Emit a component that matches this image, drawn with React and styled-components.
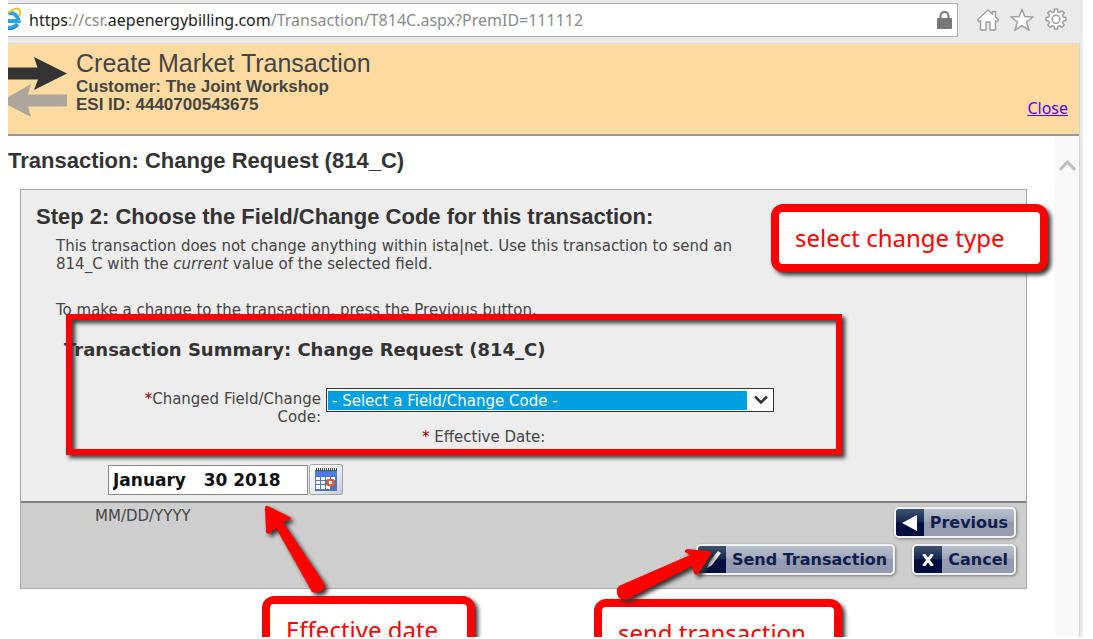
import React from 'react';
import styled, { createGlobalStyle } from 'styled-components';

const verdana = '"DejaVu Sans", Verdana, sans-serif';
const arial = '"Liberation Sans", Arial, sans-serif';
const segoe = '"Noto Sans", "Segoe UI", sans-serif';

const GlobalStyle = createGlobalStyle`
  *, *::before, *::after { box-sizing: border-box; }
  body { margin: 0; background: #fff; color: #444; font-family: ${verdana}; }
  h1, h2, h3, p { margin: 0; }
`;

const BrowserWindow = styled.div`
  position: relative;
  display: flex;
  flex-direction: column;
  min-height: calc(100vh - 2px);
  margin: 0 10px 2px 8px;
  padding-right: 3px;
  overflow: hidden;
  background: #eaeaea;
`;

const Toolbar = styled.div`
  display: flex;
  align-items: center;
  gap: 18px;
  height: 43px;
  padding: 3px 12px 6px 0;
`;

const AddressBar = styled.div`
  display: flex;
  flex: 1;
  align-items: center;
  height: 34px;
  padding-right: 5px;
  border: 1px solid #adadad;
  border-left: 0;
  background: #fff;
`;

const Url = styled.div`
  flex: 1;
  margin-left: 7px;
  color: #8a8a8a;
  font: 16px/20px ${segoe};
  white-space: nowrap;
`;

const Strong = styled.span`
  color: #222;
`;

const ToolIcons = styled.div`
  display: flex;
  gap: 10px;
`;

const IconButton = styled.button`
  display: flex;
  padding: 0;
  border: 0;
  background: none;
`;

const Viewport = styled.div`
  display: flex;
  flex: 1;
  flex-direction: column;
  border-top: 1px solid #dcdcdc;
  border-right: 1px solid #d4d4d4;
  background: #fff;
`;

const Header = styled.header`
  display: flex;
  height: 92px;
  padding: 4px 11px 0 0;
  gap: 9px;
  border-bottom: 2px solid #999;
  background: #ffdba2;
`;

const HeaderText = styled.div`
  flex: 1;
  font-family: ${arial};
`;

const PageTitle = styled.h1`
  font-size: 25px;
  font-weight: 400;
  line-height: 30px;
`;

const Detail = styled.p`
  font-size: 17px;
  font-weight: 700;
  line-height: 18px;
`;

const CloseLink = styled.a`
  align-self: flex-end;
  margin-bottom: 14px;
  color: #5500e0;
  font: 16px/24px ${segoe};
`;

const Body = styled.div`
  display: flex;
  flex: 1;
`;

const Main = styled.main`
  flex: 1;
  padding: 12px 28px 48px 0;
`;

const Heading = styled.h2`
  color: #333;
  font: 700 22px/26px ${arial};
`;

const ScrollTrack = styled.div`
  width: 24px;
  padding: 22px 0 0 4px;
  background: #f8f8f8;
`;

const Panel = styled.form`
  margin: 15px 0 0 12px;
  border: 1px solid #a8a8a8;
  background: #ededed;
`;

const PanelContent = styled.div`
  padding: 14px 15px 6px;
`;

const Copy = styled.div`
  max-width: 740px;
  margin: 7px 0 0 20px;
  font-size: 15px;
  line-height: 18px;
`;

const Spaced = styled.p`
  margin-top: 28px;
`;

const SummaryTitle = styled.h3`
  margin: 19px 0 0 28px;
  color: #333;
  font: 700 18px/24px ${verdana};
`;

const FieldRow = styled.div`
  display: flex;
  gap: 5px;
  margin-top: 26px;
  font-size: 15px;
  line-height: 18px;
`;

const FieldLabel = styled.label`
  width: 285px;
  padding: 2px 0 0 90px;
  text-align: right;
`;

const Required = styled.span`
  color: #800000;
`;

const SelectWrap = styled.div`
  position: relative;
  width: 448px;
  height: 24px;
`;

const Select = styled.select`
  display: block;
  width: 100%;
  height: 24px;
  padding: 2px 1px 1px;
  border: 1px solid #333;
  border-radius: 0;
  appearance: none;
  background: linear-gradient(#00a0e0, #00a0e0) left / calc(100% - 25px) 100% no-repeat content-box, #fff;
  color: #fff;
  font: 15px/20px ${verdana};
  text-indent: 4px;
`;

const SelectArrow = styled.svg`
  position: absolute;
  top: 7px;
  right: 5px;
  pointer-events: none;
`;

const DateLabel = styled.label`
  display: block;
  margin: 2px 0 0 386px;
  font-size: 15px;
  line-height: 18px;
`;

const DateRow = styled.div`
  display: flex;
  align-items: flex-end;
  gap: 1px;
  margin: 18px 0 0 72px;
`;

const DateInput = styled.input`
  width: 200px;
  height: 30px;
  padding: 0 4px;
  border: 1px solid #888;
  background: #fff;
  color: #111;
  font: 700 17px/24px ${verdana};
  white-space: pre;
`;

const CalendarButton = styled.button`
  display: flex;
  align-items: center;
  justify-content: center;
  width: 34px;
  height: 31px;
  padding: 0;
  border: 1px solid #a3a3b5;
  border-radius: 3px;
  background: linear-gradient(135deg, #fff, #e6e6f0 60%, #c8c8d8);
`;

const PanelFooter = styled.div`
  display: flex;
  justify-content: space-between;
  height: 87px;
  padding: 4px 10px 0 74px;
  border-top: 2px solid #808080;
  background: #cecece;
`;

const Hint = styled.span`
  font-size: 15px;
  line-height: 18px;
`;

const Actions = styled.div`
  display: flex;
  flex-direction: column;
  align-items: flex-end;
  gap: 6px;
`;

const ActionRow = styled.div`
  display: flex;
  gap: 17px;
`;

const ActionButton = styled.button`
  display: flex;
  align-items: stretch;
  height: 31px;
  padding: 0;
  overflow: hidden;
  border: 2px solid #f1f2f5;
  border-radius: 5px;
  background: linear-gradient(#b8bfcd, #a2a9bb 45%, #949bb0 50%, #959cb0);
  box-shadow: 1px 1px 3px #777;
  color: #0f1e4c;
  font: 700 16px/27px ${verdana};
`;

const ActionIcon = styled.span`
  display: flex;
  align-items: center;
  justify-content: center;
  width: 28px;
  background: linear-gradient(#3f5370, #15264d 48%, #000f3e 52%);
`;

const ActionText = styled.span`
  padding: 0 6px;
`;

const Callout = styled.div`
  position: absolute;
  top: ${(p) => p.$top}px;
  left: ${(p) => (p.$left === undefined ? 'auto' : `${p.$left}px`)};
  right: ${(p) => (p.$right === undefined ? 'auto' : `${p.$right}px`)};
  width: ${(p) => p.$width}px;
  height: 68px;
  padding: 10px 16px;
  border: 8px solid #f00;
  border-radius: 12px;
  background: #fff;
  box-shadow: 3px 3px 4px #333;
  color: #f00;
  font: 24px/32px ${segoe};
  white-space: nowrap;
`;

const Highlight = styled.div`
  position: absolute;
  top: 314px;
  left: 58px;
  right: 241px;
  height: 141px;
  border: 6px solid #f00;
  filter: drop-shadow(3px 3px 2px #333);
  pointer-events: none;
`;

const Pointer = styled.svg`
  position: absolute;
  top: ${(p) => p.$top}px;
  left: ${(p) => (p.$left === undefined ? 'auto' : `${p.$left}px`)};
  right: ${(p) => (p.$right === undefined ? 'auto' : `${p.$right}px`)};
  overflow: visible;
  filter: drop-shadow(3px 3px 2px #333);
  pointer-events: none;
`;

function BrowserLogo() {
  return (
    <svg width="14" height="26" viewBox="0 0 14 26" aria-hidden="true">
      <path d="M0 6.500C5 4.500 9.500 8 10.500 14H0M0 20.500c4 .8 7-.6 9.500-3.500" fill="none" stroke="#2aa3df" strokeWidth="4" />
      <path d="M0 22.500c4 .6 8-1 10.500-4.500" fill="none" stroke="#1679b8" strokeWidth="1" />
      <path d="M0 6C5 1.500 10 .5 11.700 2.800c.9 1.500.4 4-.8 6.500" fill="none" stroke="#f6c21c" strokeWidth="2" />
    </svg>
  );
}

function LockIcon() {
  return (
    <svg width="15" height="18" viewBox="0 0 15 18" aria-hidden="true">
      <path d="M3.500 8V5a4 4 0 0 1 8 0v3" fill="none" stroke="#777" strokeWidth="2" />
      <rect y="7" width="15" height="11" rx="1" fill="#777" />
    </svg>
  );
}

const glyph = { fill: '#fff', stroke: '#a0a0a0', strokeWidth: 1.5, strokeLinejoin: 'round' };

function HomeIcon() {
  return (
    <svg width="24" height="24" viewBox="0 0 24 24" aria-hidden="true">
      <path {...glyph} d="M12 2 1.500 12l1.700 1.800 1.300-1V22h5.500v-8h4v8h5.500v-9.200l1.300 1 1.700-1.800-3-2.900V3.500h-3v2.700z" />
    </svg>
  );
}

function StarIcon() {
  return (
    <svg width="24" height="24" viewBox="0 0 24 24" aria-hidden="true">
      <path {...glyph} d="m12 1.300 2.800 7.200 8.200.5-6.500 5 2.600 8.300L12 17.700l-7.100 4.600L7.500 14 1 9l8.200-.5z" />
    </svg>
  );
}

function GearIcon() {
  return (
    <svg width="24" height="24" viewBox="0 0 24 24" aria-hidden="true">
      <path {...glyph} d="M10.200 3.700 10.500 1h3l.3 2.700 2 .8 2.100-1.700L20.200 5l-1.700 2.100.8 2 2.700.4v3.100l-2.700.3-.8 2 1.700 2.100-2.300 2.300-2.100-1.700-2 .8-.3 2.600h-3l-.3-2.600-2-.8-2.100 1.700L3.800 17l1.700-2.100-.8-2-2.700-.3V9.500l2.700-.4.8-2L3.800 5l2.300-2.200 2.100 1.700z" />
      <circle cx="12" cy="11.300" r="4" {...glyph} />
    </svg>
  );
}

function TransferLogo() {
  return (
    <svg width="59" height="72" viewBox="0 0 59 72" aria-hidden="true">
      <path d="M0 19.500h29.500L26 9l33 16.500L26 42l4-10.500H0z" fill="#333" />
      <path d="M59 46.500v12H20L23 69 0 57v-8l23-13-3 10.500z" fill="#aea69a" />
    </svg>
  );
}

function CalendarIcon() {
  return (
    <svg width="23" height="23" viewBox="0 0 23 23" aria-hidden="true">
      <rect x="0" y="2" width="22" height="21" fill="#5274ae" />
      <rect x="0" y="4" width="22" height="4" fill="#4b7de8" />
      <path d="M1 9h4v3H1zm5 0h4v3H6zm5 0h4v3h-4zm5 0h4v3h-4zM1 13h4v3H1zm5 0h4v3H6zM1 17h4v4H1zm5 0h4v4H6zm5 0h4v4h-4z" fill="#fff" />
      <rect x="13" y="12" width="5" height="5" fill="#fff" stroke="#f05a30" strokeWidth="2" />
      <path d="M1 1.500h21" stroke="#444" strokeWidth="3" strokeDasharray="1 1" />
    </svg>
  );
}

export default function App() {
  return (
    <>
      <GlobalStyle />
      <BrowserWindow>
        <Toolbar>
          <AddressBar>
            <BrowserLogo />
            <Url>
              <Strong>https</Strong>://csr.<Strong>aepenergybilling.com</Strong>/Transaction/T814C.aspx?PremID=111112
            </Url>
            <LockIcon />
          </AddressBar>
          <ToolIcons>
            <IconButton aria-label="Home"><HomeIcon /></IconButton>
            <IconButton aria-label="Favorites"><StarIcon /></IconButton>
            <IconButton aria-label="Tools"><GearIcon /></IconButton>
          </ToolIcons>
        </Toolbar>
        <Viewport>
          <Header>
            <TransferLogo />
            <HeaderText>
              <PageTitle>Create Market Transaction</PageTitle>
              <Detail>Customer: The Joint Workshop</Detail>
              <Detail>ESI ID: 4440700543675</Detail>
            </HeaderText>
            <CloseLink href="#close">Close</CloseLink>
          </Header>
          <Body>
            <Main>
              <Heading>Transaction: Change Request (814_C)</Heading>
              <Panel onSubmit={(e) => e.preventDefault()}>
                <PanelContent>
                  <Heading>Step 2: Choose the Field/Change Code for this transaction:</Heading>
                  <Copy>
                    <p>
                      This transaction does not change anything within ista|net. Use this transaction to send an
                      <br />
                      814_C with the <em>current</em> value of the selected field.
                    </p>
                    <Spaced>To make a change to the transaction, press the Previous button.</Spaced>
                  </Copy>
                  <SummaryTitle>Transaction Summary: Change Request (814_C)</SummaryTitle>
                  <FieldRow>
                    <FieldLabel htmlFor="change-code">
                      <Required>*</Required>Changed Field/Change Code:
                    </FieldLabel>
                    <SelectWrap>
                      <Select id="change-code">
                        <option>- Select a Field/Change Code -</option>
                      </Select>
                      <SelectArrow width="16" height="11" viewBox="0 0 16 11" aria-hidden="true">
                        <path d="m2 1.500 6 6 6-6" fill="none" stroke="#333" strokeWidth="2.500" />
                      </SelectArrow>
                    </SelectWrap>
                  </FieldRow>
                  <DateLabel htmlFor="effective-date">
                    <Required>*</Required> Effective Date:
                  </DateLabel>
                  <DateRow>
                    <DateInput id="effective-date" defaultValue={'January\u00a0\u00a0 30 2018'} />
                    <CalendarButton type="button" aria-label="Choose date"><CalendarIcon /></CalendarButton>
                  </DateRow>
                </PanelContent>
                <PanelFooter>
                  <Hint>MM/DD/YYYY</Hint>
                  <Actions>
                    <ActionButton type="button">
                      <ActionIcon>
                        <svg width="16" height="16" viewBox="0 0 16 16" aria-hidden="true"><path d="M0 8 15 0v16z" fill="#fff" /></svg>
                      </ActionIcon>
                      <ActionText>Previous</ActionText>
                    </ActionButton>
                    <ActionRow>
                      <ActionButton type="submit">
                        <ActionIcon>
                          <svg width="20" height="20" viewBox="0 0 20 20" aria-hidden="true"><path d="m5 18 2-6L16 1l3 2-9 12z" fill="#eee" /></svg>
                        </ActionIcon>
                        <ActionText>Send Transaction</ActionText>
                      </ActionButton>
                      <ActionButton type="button">
                        <ActionIcon>
                          <svg width="12" height="12" viewBox="0 0 12 12" aria-hidden="true"><path d="m1.500 0 9 12M10.500 0l-9 12" stroke="#fff" strokeWidth="3" /></svg>
                        </ActionIcon>
                        <ActionText>Cancel</ActionText>
                      </ActionButton>
                    </ActionRow>
                  </Actions>
                </PanelFooter>
              </Panel>
            </Main>
            <ScrollTrack>
              <svg width="17" height="15" viewBox="0 0 17 15" aria-hidden="true"><path d="m1 12 7.500-8 7.500 8" fill="none" stroke="#bdbdbd" strokeWidth="3" /></svg>
            </ScrollTrack>
          </Body>
        </Viewport>

        <Highlight />
        <Callout $top={204} $right={35} $width={277}>select change type</Callout>
        <Callout $top={596} $left={254} $width={213}>Effective date</Callout>
        <Callout $top={599} $right={241} $width={248}>send transaction</Callout>
        <Pointer $top={505} $left={257} width="63" height="88" viewBox="0 0 63 88" aria-hidden="true">
          <path d="M3 1 25 12q2 2-1 3l-6 2L59 78q2 5-1 7-4 4-11 2L11 23 5 28q-3 2-4-1L0 3q0-3 3-2z" fill="#f00" />
        </Pointer>
        <Pointer $top={549} $right={370} width="96" height="51" viewBox="0 0 96 51" aria-hidden="true">
          <path d="m94 5-13 20q-2 2-4-1l-2-7L11 50Q1 52 0 44q-1-6 4-8l69-30-5-3q-1-2 2-3l21 2q4 0 3 3z" fill="#f00" />
        </Pointer>
      </BrowserWindow>
    </>
  );
}
